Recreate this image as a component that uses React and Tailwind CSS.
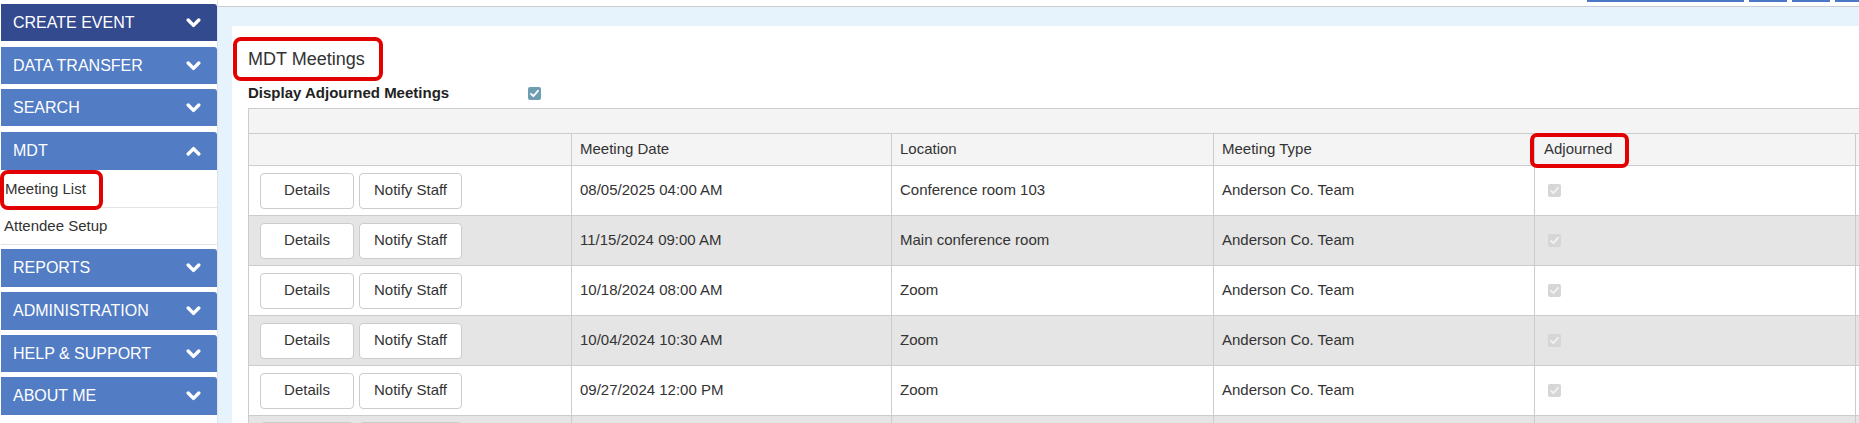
import React from "react";

function Chevron({ up }) {
  return (
    <svg width="15" height="10" viewBox="0 0 15 10" className="block">
      <path
        d={up ? "M2.2 8 L7.5 2.6 L12.8 8" : "M2.2 2 L7.5 7.4 L12.8 2"}
        stroke="white"
        strokeWidth="3.4"
        fill="none"
        strokeLinecap="round"
        strokeLinejoin="round"
      />
    </svg>
  );
}

function Bar({ label, up, dark, className }) {
  return (
    <div
      className={
        "h-[37px] flex items-center justify-between pl-[12px] pr-[16px] rounded-tr-[3px] text-white text-[16px] " +
        (dark ? "bg-[#344a8f] " : "bg-[#527cc4] ") +
        className
      }
    >
      <span>{label}</span>
      <Chevron up={up} />
    </div>
  );
}

function Check({ color, checkColor }) {
  return (
    <svg width="13" height="13" viewBox="0 0 13 13" className="block">
      <rect x="0" y="0" width="13" height="13" rx="2" fill={color} />
      <path d="M3 6.8 L5.4 9.2 L10 3.8" stroke={checkColor} strokeWidth="1.8" fill="none" strokeLinecap="round" strokeLinejoin="round" />
    </svg>
  );
}

const rows = [
  ["08/05/2025 04:00 AM", "Conference room 103", "Anderson Co. Team"],
  ["11/15/2024 09:00 AM", "Main conference room", "Anderson Co. Team"],
  ["10/18/2024 08:00 AM", "Zoom", "Anderson Co. Team"],
  ["10/04/2024 10:30 AM", "Zoom", "Anderson Co. Team"],
  ["09/27/2024 12:00 PM", "Zoom", "Anderson Co. Team"],
];

export default function App() {
  return (
    <div className="w-[1859px] h-[423px] overflow-hidden flex bg-white font-['Liberation_Sans',Arial,sans-serif] text-[#333]">
      {/* Sidebar */}
      <div className="w-[218px] shrink-0 bg-white border-r border-[#dde3ea] pl-[1px] flex flex-col">
        <Bar label="CREATE EVENT" dark className="mt-[4px]" />
        <Bar label="DATA TRANSFER" className="mt-[6px]" />
        <Bar label="SEARCH" className="mt-[5px]" />
        <Bar label="MDT" up className="mt-[6px] h-[38px]" />
        <div className="relative h-[38px] border-b border-[#e3e3e3] flex items-center pl-[4px] pt-[2px] text-[15px] text-[#333]">
          Meeting List
          <div className="absolute left-[-1px] top-0 w-[103px] h-[40px] border-4 border-[#e30000] rounded-[8px]" />
        </div>
        <div className="h-[37px] border-b border-[#e3e3e3] flex items-center pl-[3px] text-[15px] text-[#333]">
          Attendee Setup
        </div>
        <Bar label="REPORTS" className="mt-[4px] h-[38px]" />
        <Bar label="ADMINISTRATION" className="mt-[5px] h-[38px]" />
        <Bar label="HELP & SUPPORT" className="mt-[5px]" />
        <Bar label="ABOUT ME" className="mt-[5px] h-[38px]" />
      </div>

      {/* Main */}
      <div className="flex-1 min-w-0 flex flex-col bg-[#e6f2fc]">
        <div className="h-[7px] shrink-0 bg-white border-b border-[#c9cdd2] flex justify-end items-start gap-[5px]">
          <div className="w-[157px] h-[2px] border-x border-b-2 border-[#4a78c4] bg-[#dfe6ef]" />
          <div className="w-[38px] h-[2px] border-x border-b-2 border-[#4a78c4] bg-[#dfe6ef]" />
          <div className="w-[38px] h-[2px] border-x border-b-2 border-[#4a78c4] bg-[#dfe6ef]" />
          <div className="w-[24px] h-[2px] border-l border-b-2 border-[#4a78c4] bg-[#dfe6ef]" />
        </div>
        <div className="flex-1 pl-[14px] pt-[19px] flex flex-col">
          <div className="flex-1 bg-white pl-[16px] pt-[11px]">
            <div className="-ml-[15px] w-[150px] h-[44px] flex items-center border-4 border-[#e30000] rounded-[8px] pl-[11px] text-[18px] text-[#333]">
              MDT Meetings
            </div>
            <div className="mt-[2px] h-[20px] flex items-center">
              <div className="w-[280px] font-bold text-[15px] text-[#222]">Display Adjourned Meetings</div>
              <Check color="#6e9db2" checkColor="#ffffff" />
            </div>
            <table className="mt-[5px] table-fixed border-collapse w-[1700px] text-[15px] text-[#333]">
              <colgroup>
                <col className="w-[323px]" />
                <col className="w-[320px]" />
                <col className="w-[322px]" />
                <col className="w-[321px]" />
                <col className="w-[321px]" />
                <col className="w-[93px]" />
              </colgroup>
              <thead>
                <tr className="h-[25px] bg-[#f4f4f4]">
                  <td colSpan={6} className="border border-[#cccccc] p-0" />
                </tr>
                <tr className="h-[32px] bg-[#f4f4f4]">
                  <th className="border border-[#cccccc] font-normal text-left px-[8px]" />
                  <th className="border border-[#cccccc] font-normal text-left px-[8px]">Meeting Date</th>
                  <th className="border border-[#cccccc] font-normal text-left px-[8px]">Location</th>
                  <th className="border border-[#cccccc] font-normal text-left px-[8px]">Meeting Type</th>
                  <th className="relative border border-[#cccccc] font-normal text-left px-[9px]">
                    Adjourned
                    <div className="absolute left-[-5px] top-[-1px] w-[99px] h-[35px] border-4 border-[#e30000] rounded-[7px]" />
                  </th>
                  <th className="border border-[#cccccc] font-normal text-left px-[8px]" />
                </tr>
              </thead>
              <tbody>
                {rows.map((r, i) => (
                  <tr key={i} className={"h-[50px] " + (i % 2 === 1 ? "bg-[#e5e5e5]" : "bg-white")}>
                    <td className="border border-[#cccccc] pl-[11px] py-0">
                      <div className="flex gap-[5px]">
                        <button className="w-[94px] h-[36px] bg-white border border-[#cccccc] rounded-[4px] text-[15px] text-[#333]">
                          Details
                        </button>
                        <button className="w-[103px] h-[36px] bg-white border border-[#cccccc] rounded-[4px] text-[15px] text-[#333]">
                          Notify Staff
                        </button>
                      </div>
                    </td>
                    <td className="border border-[#cccccc] px-[8px]">{r[0]}</td>
                    <td className="border border-[#cccccc] px-[8px]">{r[1]}</td>
                    <td className="border border-[#cccccc] px-[8px]">{r[2]}</td>
                    <td className="border border-[#cccccc] pl-[13px]">
                      <Check color="#d6d6d6" checkColor="#f2f2f2" />
                    </td>
                    <td className="border border-[#cccccc] px-[8px]" />
                  </tr>
                ))}
                <tr className="h-[50px] bg-[#e5e5e5]">
                  <td className="border border-[#cccccc] pl-[11px] align-top pt-[6px]">
                    <div className="flex gap-[5px]">
                      <div className="w-[94px] h-[36px] bg-white border border-[#cccccc] rounded-[4px]" />
                      <div className="w-[103px] h-[36px] bg-white border border-[#cccccc] rounded-[4px]" />
                    </div>
                  </td>
                  <td className="border border-[#cccccc]" />
                  <td className="border border-[#cccccc]" />
                  <td className="border border-[#cccccc]" />
                  <td className="border border-[#cccccc]" />
                  <td className="border border-[#cccccc]" />
                </tr>
              </tbody>
            </table>
          </div>
        </div>
      </div>
    </div>
  );
}
